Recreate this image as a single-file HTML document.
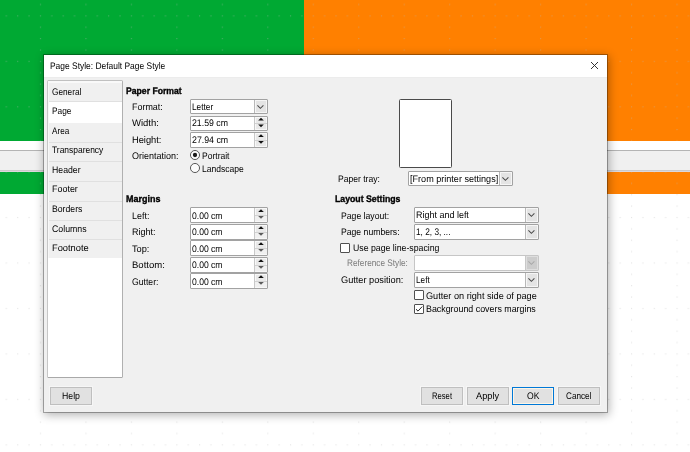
<!DOCTYPE html>
<html><head><meta charset="utf-8"><style>
html,body{margin:0;padding:0;}
body{width:690px;height:452px;overflow:hidden;position:relative;background:#fff;font-family:"Liberation Sans",sans-serif;}
div,span,svg{position:absolute;box-sizing:content-box;}
span{white-space:nowrap;line-height:12px;text-rendering:geometricPrecision;}
</style></head><body>
<div style="left:0px;top:0px;width:304px;height:141px;background:#00a933"></div>
<div style="left:304px;top:0px;width:386px;height:141px;background:#ff8000"></div>
<div style="left:0px;top:150px;width:690px;height:1px;background:#b4b4b4"></div>
<div style="left:0px;top:151px;width:690px;height:19px;background:#f0f0f0"></div>
<div style="left:0px;top:170px;width:690px;height:1px;background:#cbcacb"></div>
<div style="left:0px;top:171px;width:690px;height:1px;background:#dcd8dc"></div>
<div style="left:0px;top:172px;width:304px;height:22px;background:#00a933"></div>
<div style="left:304px;top:172px;width:386px;height:22px;background:#ff8000"></div>
<svg style="position:absolute;left:0;top:0px" width="690" height="141" viewBox="0 0 690 141"><defs><pattern id="g0" patternUnits="userSpaceOnUse" width="45.47" height="45.47" x="39.90" y="15.35"><g fill="#b8b8b8" fill-opacity="0.4"><rect x="0.00" y="0" width="1.1" height="1.1"/><rect x="11.37" y="0" width="1.1" height="1.1"/><rect x="22.73" y="0" width="1.1" height="1.1"/><rect x="34.10" y="0" width="1.1" height="1.1"/><rect x="0" y="11.37" width="1.1" height="1.1"/><rect x="0" y="22.73" width="1.1" height="1.1"/><rect x="0" y="34.10" width="1.1" height="1.1"/></g></pattern></defs><rect x="0" y="0" width="690" height="141" fill="url(#g0)"/></svg>
<svg style="position:absolute;left:0;top:172px" width="690" height="22" viewBox="0 172 690 22"><defs><pattern id="g172" patternUnits="userSpaceOnUse" width="45.47" height="45.47" x="39.90" y="216.95"><g fill="#b8b8b8" fill-opacity="0.4"><rect x="0.00" y="0" width="1.1" height="1.1"/><rect x="11.37" y="0" width="1.1" height="1.1"/><rect x="22.73" y="0" width="1.1" height="1.1"/><rect x="34.10" y="0" width="1.1" height="1.1"/><rect x="0" y="11.37" width="1.1" height="1.1"/><rect x="0" y="22.73" width="1.1" height="1.1"/><rect x="0" y="34.10" width="1.1" height="1.1"/></g></pattern></defs><rect x="0" y="172" width="690" height="22" fill="url(#g172)"/></svg>
<svg style="position:absolute;left:0;top:194px" width="690" height="258" viewBox="0 194 690 258"><defs><pattern id="g194" patternUnits="userSpaceOnUse" width="45.47" height="45.47" x="39.90" y="216.95"><g fill="#b8b8b8" fill-opacity="0.36"><rect x="0.00" y="0" width="1.1" height="1.1"/><rect x="11.37" y="0" width="1.1" height="1.1"/><rect x="22.73" y="0" width="1.1" height="1.1"/><rect x="34.10" y="0" width="1.1" height="1.1"/><rect x="0" y="11.37" width="1.1" height="1.1"/><rect x="0" y="22.73" width="1.1" height="1.1"/><rect x="0" y="34.10" width="1.1" height="1.1"/></g></pattern></defs><rect x="0" y="194" width="690" height="258" fill="url(#g194)"/></svg>
<div style="left:43px;top:54px;width:563px;height:357px;border:1px solid rgba(0,0,0,0.3);background:#f0f0f0;background-clip:padding-box;box-shadow:1px 2px 9px rgba(0,0,0,0.3)"></div>
<div style="left:44px;top:55px;width:563px;height:22px;background:#fff"></div>
<div style="left:44px;top:77px;width:563px;height:1px;background:#ececec"></div>
<svg style="position:absolute;left:590px;top:61px" width="10" height="10" viewBox="0 0 10 10"><path d="M1 1 L8 8 M8 1 L1 8" stroke="#2a2a2a" stroke-width="0.95" fill="none"/></svg>
<div style="left:47px;top:80px;width:74px;height:296px;border:1px solid;border-color:#c0c0c0 #b0b0b0 #a9a9a9 #c6c6c6;border-radius:1.5px;background:#fff"></div>
<div style="left:48px;top:81px;width:74px;height:2px;background:#f9f9f9"></div>
<div style="left:49px;top:83.00px;width:73px;height:18.80px;background:#f0f0f0;box-shadow:-1px 0 0 #f8f8f8"></div>
<div style="left:49px;top:100.80px;width:73px;height:1px;background:#e0e0e0"></div>
<div style="left:49px;top:101.80px;width:73px;height:20.80px;background:#fff;box-shadow:-1px 0 0 #f8f8f8"></div>
<div style="left:49px;top:122.60px;width:73px;height:20.30px;background:#f0f0f0;box-shadow:-1px 0 0 #f8f8f8"></div>
<div style="left:49px;top:141.90px;width:73px;height:1px;background:#e0e0e0"></div>
<div style="left:49px;top:142.90px;width:73px;height:19.20px;background:#f0f0f0;box-shadow:-1px 0 0 #f8f8f8"></div>
<div style="left:49px;top:161.10px;width:73px;height:1px;background:#e0e0e0"></div>
<div style="left:49px;top:162.10px;width:73px;height:19.80px;background:#f0f0f0;box-shadow:-1px 0 0 #f8f8f8"></div>
<div style="left:49px;top:180.90px;width:73px;height:1px;background:#e0e0e0"></div>
<div style="left:49px;top:181.90px;width:73px;height:19.60px;background:#f0f0f0;box-shadow:-1px 0 0 #f8f8f8"></div>
<div style="left:49px;top:200.50px;width:73px;height:1px;background:#e0e0e0"></div>
<div style="left:49px;top:201.50px;width:73px;height:19.30px;background:#f0f0f0;box-shadow:-1px 0 0 #f8f8f8"></div>
<div style="left:49px;top:219.80px;width:73px;height:1px;background:#e0e0e0"></div>
<div style="left:49px;top:220.80px;width:73px;height:19.20px;background:#f0f0f0;box-shadow:-1px 0 0 #f8f8f8"></div>
<div style="left:49px;top:239.00px;width:73px;height:1px;background:#e0e0e0"></div>
<div style="left:49px;top:240.00px;width:73px;height:18.40px;background:#f0f0f0;box-shadow:-1px 0 0 #f8f8f8"></div>
<div style="left:190px;top:99px;width:76px;height:13px;border:1px solid #a2a2a2;border-radius:1px;background:#fff"></div>
<div style="left:254px;top:100px;width:12px;height:13px;background:#e4e4e4;border-left:1px solid #b8b8b8;box-shadow:inset 1px 1px 0 #f6f6f6,inset -1px -1px 0 #f6f6f6"></div>
<svg style="position:absolute;left:256.6px;top:104.6px" width="8" height="5" viewBox="0 0 8 5"><path d="M0.4 0.4 L3.4 3.3 L6.4 0.4" stroke="#4a4a4a" stroke-width="1.05" fill="none"/></svg>
<div style="left:190px;top:116px;width:76px;height:13px;border:1px solid #a2a2a2;border-radius:1px;background:#fff"></div>
<div style="left:254px;top:117px;width:12px;height:13px;background:#e9e9e9;border-left:1px solid #c8c8c8;box-shadow:inset 1px 1px 0 #f8f8f8,inset -1px -1px 0 #f8f8f8"></div>
<div style="left:255px;top:123.0px;width:12px;height:1px;background:#d2d2d2"></div>
<svg style="position:absolute;left:254.6px;top:117px" width="12" height="13" viewBox="0 0 12 13"><path d="M3.2 3.50 L8.8 3.50 L6 0.80 Z" fill="#111"/><path d="M3.2 7.50 L8.8 7.50 L6 10.20 Z" fill="#111"/></svg>
<div style="left:190px;top:132px;width:76px;height:14px;border:1px solid #a2a2a2;border-radius:1px;background:#fff"></div>
<div style="left:254px;top:133px;width:12px;height:14px;background:#e9e9e9;border-left:1px solid #c8c8c8;box-shadow:inset 1px 1px 0 #f8f8f8,inset -1px -1px 0 #f8f8f8"></div>
<div style="left:255px;top:139.5px;width:12px;height:1px;background:#d2d2d2"></div>
<svg style="position:absolute;left:254.6px;top:133px" width="12" height="14" viewBox="0 0 12 14"><path d="M3.2 4.00 L8.8 4.00 L6 1.30 Z" fill="#111"/><path d="M3.2 8.00 L8.8 8.00 L6 10.70 Z" fill="#111"/></svg>
<svg style="position:absolute;left:189px;top:148.6px" width="12" height="12" viewBox="0 0 12 12"><circle cx="6" cy="6" r="4.55" stroke="#474747" stroke-width="0.9" fill="#fcfcfc"/><circle cx="6" cy="6" r="2.15" fill="#1a1a1a"/></svg>
<svg style="position:absolute;left:189px;top:162.3px" width="12" height="12" viewBox="0 0 12 12"><circle cx="6" cy="6" r="4.55" stroke="#474747" stroke-width="0.9" fill="#fcfcfc"/></svg>
<div style="left:190px;top:207px;width:76px;height:14px;border:1px solid #a2a2a2;border-radius:1px;background:#fff"></div>
<div style="left:254px;top:208px;width:12px;height:14px;background:#e9e9e9;border-left:1px solid #c8c8c8;box-shadow:inset 1px 1px 0 #f8f8f8,inset -1px -1px 0 #f8f8f8"></div>
<div style="left:255px;top:215.0px;width:12px;height:6.0px;background:#f0f0f0"></div>
<div style="left:255px;top:214.5px;width:12px;height:1px;background:#d2d2d2"></div>
<svg style="position:absolute;left:254.6px;top:208px" width="12" height="14" viewBox="0 0 12 14"><path d="M3.2 4.00 L8.8 4.00 L6 1.30 Z" fill="#111"/><path d="M3.2 8.00 L8.8 8.00 L6 10.70 Z" fill="#5a5a5a"/></svg>
<div style="left:190px;top:224px;width:76px;height:14px;border:1px solid #a2a2a2;border-radius:1px;background:#fff"></div>
<div style="left:254px;top:225px;width:12px;height:14px;background:#e9e9e9;border-left:1px solid #c8c8c8;box-shadow:inset 1px 1px 0 #f8f8f8,inset -1px -1px 0 #f8f8f8"></div>
<div style="left:255px;top:232.0px;width:12px;height:6.0px;background:#f0f0f0"></div>
<div style="left:255px;top:231.5px;width:12px;height:1px;background:#d2d2d2"></div>
<svg style="position:absolute;left:254.6px;top:225px" width="12" height="14" viewBox="0 0 12 14"><path d="M3.2 4.00 L8.8 4.00 L6 1.30 Z" fill="#111"/><path d="M3.2 8.00 L8.8 8.00 L6 10.70 Z" fill="#5a5a5a"/></svg>
<div style="left:190px;top:240px;width:76px;height:14px;border:1px solid #a2a2a2;border-radius:1px;background:#fff"></div>
<div style="left:254px;top:241px;width:12px;height:14px;background:#e9e9e9;border-left:1px solid #c8c8c8;box-shadow:inset 1px 1px 0 #f8f8f8,inset -1px -1px 0 #f8f8f8"></div>
<div style="left:255px;top:248.0px;width:12px;height:6.0px;background:#f0f0f0"></div>
<div style="left:255px;top:247.5px;width:12px;height:1px;background:#d2d2d2"></div>
<svg style="position:absolute;left:254.6px;top:241px" width="12" height="14" viewBox="0 0 12 14"><path d="M3.2 4.00 L8.8 4.00 L6 1.30 Z" fill="#111"/><path d="M3.2 8.00 L8.8 8.00 L6 10.70 Z" fill="#5a5a5a"/></svg>
<div style="left:190px;top:257px;width:76px;height:14px;border:1px solid #a2a2a2;border-radius:1px;background:#fff"></div>
<div style="left:254px;top:258px;width:12px;height:14px;background:#e9e9e9;border-left:1px solid #c8c8c8;box-shadow:inset 1px 1px 0 #f8f8f8,inset -1px -1px 0 #f8f8f8"></div>
<div style="left:255px;top:265.0px;width:12px;height:6.0px;background:#f0f0f0"></div>
<div style="left:255px;top:264.5px;width:12px;height:1px;background:#d2d2d2"></div>
<svg style="position:absolute;left:254.6px;top:258px" width="12" height="14" viewBox="0 0 12 14"><path d="M3.2 4.00 L8.8 4.00 L6 1.30 Z" fill="#111"/><path d="M3.2 8.00 L8.8 8.00 L6 10.70 Z" fill="#5a5a5a"/></svg>
<div style="left:190px;top:273px;width:76px;height:14px;border:1px solid #a2a2a2;border-radius:1px;background:#fff"></div>
<div style="left:254px;top:274px;width:12px;height:14px;background:#e9e9e9;border-left:1px solid #c8c8c8;box-shadow:inset 1px 1px 0 #f8f8f8,inset -1px -1px 0 #f8f8f8"></div>
<div style="left:255px;top:281.0px;width:12px;height:6.0px;background:#f0f0f0"></div>
<div style="left:255px;top:280.5px;width:12px;height:1px;background:#d2d2d2"></div>
<svg style="position:absolute;left:254.6px;top:274px" width="12" height="14" viewBox="0 0 12 14"><path d="M3.2 4.00 L8.8 4.00 L6 1.30 Z" fill="#111"/><path d="M3.2 8.00 L8.8 8.00 L6 10.70 Z" fill="#5a5a5a"/></svg>
<div style="left:399px;top:99px;width:51px;height:67px;border:1px solid #4a4a4a;border-radius:1.5px;background:#fff"></div>
<div style="left:408px;top:171px;width:103px;height:13px;border:1px solid #a2a2a2;border-radius:1px;background:#fff"></div>
<div style="left:499px;top:172px;width:12px;height:13px;background:#e4e4e4;border-left:1px solid #b8b8b8;box-shadow:inset 1px 1px 0 #f6f6f6,inset -1px -1px 0 #f6f6f6"></div>
<svg style="position:absolute;left:501.6px;top:176.6px" width="8" height="5" viewBox="0 0 8 5"><path d="M0.4 0.4 L3.4 3.3 L6.4 0.4" stroke="#4a4a4a" stroke-width="1.05" fill="none"/></svg>
<div style="left:414px;top:207px;width:123px;height:14px;border:1px solid #a2a2a2;border-radius:1px;background:#fff"></div>
<div style="left:525px;top:208px;width:12px;height:14px;background:#e4e4e4;border-left:1px solid #b8b8b8;box-shadow:inset 1px 1px 0 #f6f6f6,inset -1px -1px 0 #f6f6f6"></div>
<svg style="position:absolute;left:527.6px;top:212.6px" width="8" height="5" viewBox="0 0 8 5"><path d="M0.4 0.4 L3.4 3.3 L6.4 0.4" stroke="#4a4a4a" stroke-width="1.05" fill="none"/></svg>
<div style="left:414px;top:224px;width:123px;height:14px;border:1px solid #a2a2a2;border-radius:1px;background:#fff"></div>
<div style="left:525px;top:225px;width:12px;height:14px;background:#e4e4e4;border-left:1px solid #b8b8b8;box-shadow:inset 1px 1px 0 #f6f6f6,inset -1px -1px 0 #f6f6f6"></div>
<svg style="position:absolute;left:527.6px;top:229.6px" width="8" height="5" viewBox="0 0 8 5"><path d="M0.4 0.4 L3.4 3.3 L6.4 0.4" stroke="#4a4a4a" stroke-width="1.05" fill="none"/></svg>
<div style="left:340px;top:243px;width:8px;height:8px;border:1px solid #505050;border-radius:1px;background:#fff"></div>
<div style="left:414px;top:255px;width:123px;height:14px;border:1px solid #c6c6c6;border-radius:1px;background:#fff"></div>
<div style="left:525px;top:256px;width:12px;height:14px;background:#cccccc;border-left:1px solid #c8c8c8;box-shadow:inset 1px 1px 0 #dedede,inset -1px -1px 0 #dedede"></div>
<svg style="position:absolute;left:527.6px;top:260.6px" width="8" height="5" viewBox="0 0 8 5"><path d="M0.4 0.4 L3.4 3.3 L6.4 0.4" stroke="#a8a8a8" stroke-width="1.05" fill="none"/></svg>
<div style="left:414px;top:272px;width:123px;height:14px;border:1px solid #a2a2a2;border-radius:1px;background:#fff"></div>
<div style="left:525px;top:273px;width:12px;height:14px;background:#e4e4e4;border-left:1px solid #b8b8b8;box-shadow:inset 1px 1px 0 #f6f6f6,inset -1px -1px 0 #f6f6f6"></div>
<svg style="position:absolute;left:527.6px;top:277.6px" width="8" height="5" viewBox="0 0 8 5"><path d="M0.4 0.4 L3.4 3.3 L6.4 0.4" stroke="#4a4a4a" stroke-width="1.05" fill="none"/></svg>
<div style="left:414px;top:290px;width:8px;height:8px;border:1px solid #505050;border-radius:1px;background:#fff"></div>
<div style="left:414px;top:304px;width:8px;height:8px;border:1px solid #505050;border-radius:1px;background:#fff"></div>
<svg style="position:absolute;left:414px;top:304px" width="10" height="10" viewBox="0 0 10 10"><path d="M2 5.2 L4 7.1 L8.2 2.6" stroke="#1a1a1a" stroke-width="0.95" fill="none"/></svg>
<div style="left:50px;top:387px;width:40px;height:16px;border:1px solid #bfbfbf;background:#e1e1e1;box-shadow:0 0 0 1px #f6f6f6"></div>
<div style="left:421px;top:387px;width:40px;height:16px;border:1px solid #bfbfbf;background:#e1e1e1;box-shadow:0 0 0 1px #f6f6f6"></div>
<div style="left:467px;top:387px;width:40px;height:16px;border:1px solid #bfbfbf;background:#e1e1e1;box-shadow:0 0 0 1px #f6f6f6"></div>
<div style="left:512px;top:387px;width:40px;height:16px;border:1px solid #0078d7;background:#e1e1e1;box-shadow:inset 0 0 0 1px #fdf5e6"></div>
<div style="left:558px;top:387px;width:40px;height:16px;border:1px solid #bfbfbf;background:#e1e1e1;box-shadow:0 0 0 1px #f6f6f6"></div>
<div style="left:0;top:0;width:690px;height:452px;will-change:transform">
<span style="left:49.80px;top:61.00px;font-size:9.5px;font-weight:400;color:#000;letter-spacing:0.000px;transform:scaleX(0.8872);transform-origin:0 0">Page Style: Default Page Style</span>
<span style="left:51.80px;top:87.00px;font-size:9.5px;font-weight:400;color:#000;letter-spacing:0.000px;transform:scaleX(0.8668);transform-origin:0 0">General</span>
<span style="left:51.80px;top:106.00px;font-size:9.5px;font-weight:400;color:#000;letter-spacing:0.000px;transform:scaleX(0.8720);transform-origin:0 0">Page</span>
<span style="left:51.80px;top:126.00px;font-size:9.5px;font-weight:400;color:#000;letter-spacing:0.000px;transform:scaleX(0.8565);transform-origin:0 0">Area</span>
<span style="left:51.80px;top:145.00px;font-size:9.5px;font-weight:400;color:#000;letter-spacing:0.000px;transform:scaleX(0.8883);transform-origin:0 0">Transparency</span>
<span style="left:51.80px;top:165.00px;font-size:9.5px;font-weight:400;color:#000;letter-spacing:0.000px;transform:scaleX(0.9163);transform-origin:0 0">Header</span>
<span style="left:51.80px;top:184.00px;font-size:9.5px;font-weight:400;color:#000;letter-spacing:0.000px;transform:scaleX(0.9416);transform-origin:0 0">Footer</span>
<span style="left:51.80px;top:204.00px;font-size:9.5px;font-weight:400;color:#000;letter-spacing:0.000px;transform:scaleX(0.9131);transform-origin:0 0">Borders</span>
<span style="left:51.80px;top:224.00px;font-size:9.5px;font-weight:400;color:#000;letter-spacing:0.000px;transform:scaleX(0.9222);transform-origin:0 0">Columns</span>
<span style="left:51.80px;top:243.00px;font-size:9.5px;font-weight:400;color:#000;letter-spacing:0.000px;transform:scaleX(0.9781);transform-origin:0 0">Footnote</span>
<span style="left:126.40px;top:86.00px;font-size:9.5px;font-weight:700;color:#000;letter-spacing:0.000px;transform:scaleX(0.9086);transform-origin:0 0;-webkit-text-stroke:0.35px #000">Paper Format</span>
<span style="left:132.10px;top:102.00px;font-size:9.5px;font-weight:400;color:#000;letter-spacing:0.000px;transform:scaleX(0.9412);transform-origin:0 0">Format:</span>
<span style="left:191.70px;top:102.00px;font-size:9.5px;font-weight:400;color:#000;letter-spacing:0.000px;transform:scaleX(0.8703);transform-origin:0 0">Letter</span>
<span style="left:132.00px;top:118.00px;font-size:9.5px;font-weight:400;color:#000;letter-spacing:0.000px">Width:</span>
<span style="left:191.80px;top:118.00px;font-size:9.5px;font-weight:400;color:#000;letter-spacing:0.000px;transform:scaleX(0.9192);transform-origin:0 0">21.59 cm</span>
<span style="left:132.00px;top:135.00px;font-size:9.5px;font-weight:400;color:#000;letter-spacing:0.000px;transform:scaleX(0.9776);transform-origin:0 0">Height:</span>
<span style="left:191.80px;top:135.00px;font-size:9.5px;font-weight:400;color:#000;letter-spacing:0.000px;transform:scaleX(0.9244);transform-origin:0 0">27.94 cm</span>
<span style="left:132.00px;top:151.00px;font-size:9.5px;font-weight:400;color:#000;letter-spacing:0.000px;transform:scaleX(0.9449);transform-origin:0 0">Orientation:</span>
<span style="left:202.30px;top:151.00px;font-size:9.5px;font-weight:400;color:#000;letter-spacing:0.000px;transform:scaleX(0.8973);transform-origin:0 0">Portrait</span>
<span style="left:202.30px;top:164.00px;font-size:9.5px;font-weight:400;color:#000;letter-spacing:0.000px;transform:scaleX(0.8961);transform-origin:0 0">Landscape</span>
<span style="left:126.40px;top:194.00px;font-size:9.5px;font-weight:700;color:#000;letter-spacing:0.000px;transform:scaleX(0.9436);transform-origin:0 0;-webkit-text-stroke:0.35px #000">Margins</span>
<span style="left:132.20px;top:211.00px;font-size:9.5px;font-weight:400;color:#000;letter-spacing:0.000px;transform:scaleX(0.9414);transform-origin:0 0">Left:</span>
<span style="left:132.20px;top:227.00px;font-size:9.5px;font-weight:400;color:#000;letter-spacing:0.000px;transform:scaleX(0.9513);transform-origin:0 0">Right:</span>
<span style="left:132.20px;top:244.00px;font-size:9.5px;font-weight:400;color:#000;letter-spacing:0.000px;transform:scaleX(0.9702);transform-origin:0 0">Top:</span>
<span style="left:132.20px;top:260.00px;font-size:9.5px;font-weight:400;color:#000;letter-spacing:0.000px;transform:scaleX(1.0032);transform-origin:0 0">Bottom:</span>
<span style="left:132.20px;top:277.00px;font-size:9.5px;font-weight:400;color:#000;letter-spacing:0.000px;transform:scaleX(0.9120);transform-origin:0 0">Gutter:</span>
<span style="left:191.80px;top:211.00px;font-size:9.5px;font-weight:400;color:#000;letter-spacing:0.000px;transform:scaleX(0.9032);transform-origin:0 0">0.00 cm</span>
<span style="left:191.80px;top:227.00px;font-size:9.5px;font-weight:400;color:#000;letter-spacing:0.000px;transform:scaleX(0.9032);transform-origin:0 0">0.00 cm</span>
<span style="left:191.80px;top:244.00px;font-size:9.5px;font-weight:400;color:#000;letter-spacing:0.000px;transform:scaleX(0.9032);transform-origin:0 0">0.00 cm</span>
<span style="left:191.80px;top:260.00px;font-size:9.5px;font-weight:400;color:#000;letter-spacing:0.000px;transform:scaleX(0.9032);transform-origin:0 0">0.00 cm</span>
<span style="left:191.80px;top:277.00px;font-size:9.5px;font-weight:400;color:#000;letter-spacing:0.000px;transform:scaleX(0.9032);transform-origin:0 0">0.00 cm</span>
<span style="left:337.80px;top:174.00px;font-size:9.5px;font-weight:400;color:#000;letter-spacing:0.000px;transform:scaleX(0.9012);transform-origin:0 0">Paper tray:</span>
<span style="left:409.70px;top:174.00px;font-size:9.5px;font-weight:400;color:#000;letter-spacing:0.000px;transform:scaleX(0.9548);transform-origin:0 0">[From printer settings]</span>
<span style="left:334.90px;top:194.00px;font-size:9.5px;font-weight:700;color:#000;letter-spacing:0.000px;transform:scaleX(0.9187);transform-origin:0 0;-webkit-text-stroke:0.35px #000">Layout Settings</span>
<span style="left:340.80px;top:211.00px;font-size:9.5px;font-weight:400;color:#000;letter-spacing:0.000px;transform:scaleX(0.9104);transform-origin:0 0">Page layout:</span>
<span style="left:415.70px;top:210.00px;font-size:9.5px;font-weight:400;color:#000;letter-spacing:0.000px;transform:scaleX(0.9443);transform-origin:0 0">Right and left</span>
<span style="left:340.80px;top:227.00px;font-size:9.5px;font-weight:400;color:#000;letter-spacing:0.000px;transform:scaleX(0.9093);transform-origin:0 0">Page numbers:</span>
<span style="left:415.70px;top:227.00px;font-size:9.5px;font-weight:400;color:#000;letter-spacing:0.000px;transform:scaleX(0.8700);transform-origin:0 0">1, 2, 3, ...</span>
<span style="left:352.70px;top:243.00px;font-size:9.5px;font-weight:400;color:#000;letter-spacing:0.000px;transform:scaleX(0.9198);transform-origin:0 0">Use page line-spacing</span>
<span style="left:347.00px;top:258.00px;font-size:9.5px;font-weight:400;color:#7a7a7a;letter-spacing:0.000px;transform:scaleX(0.8665);transform-origin:0 0">Reference Style:</span>
<span style="left:340.80px;top:275.00px;font-size:9.5px;font-weight:400;color:#000;letter-spacing:0.000px;transform:scaleX(0.9674);transform-origin:0 0">Gutter position:</span>
<span style="left:415.70px;top:275.00px;font-size:9.5px;font-weight:400;color:#000;letter-spacing:0.000px;transform:scaleX(0.8639);transform-origin:0 0">Left</span>
<span style="left:426.30px;top:291.00px;font-size:9.5px;font-weight:400;color:#000;letter-spacing:0.000px;transform:scaleX(0.9622);transform-origin:0 0">Gutter on right side of page</span>
<span style="left:426.30px;top:304.00px;font-size:9.5px;font-weight:400;color:#000;letter-spacing:0.000px;transform:scaleX(0.9322);transform-origin:0 0">Background covers margins</span>
<span style="left:62.15px;top:391.00px;font-size:9.5px;font-weight:400;color:#000;letter-spacing:0.000px;transform:scaleX(0.9193);transform-origin:0 0">Help</span>
<span style="left:431.85px;top:391.00px;font-size:9.5px;font-weight:400;color:#000;letter-spacing:0.000px;transform:scaleX(0.8063);transform-origin:0 0">Reset</span>
<span style="left:476.35px;top:391.00px;font-size:9.5px;font-weight:400;color:#000;letter-spacing:0.000px;transform:scaleX(0.9703);transform-origin:0 0">Apply</span>
<span style="left:526.50px;top:391.00px;font-size:9.5px;font-weight:400;color:#000;letter-spacing:0.000px;transform:scaleX(0.9034);transform-origin:0 0">OK</span>
<span style="left:566.35px;top:391.00px;font-size:9.5px;font-weight:400;color:#000;letter-spacing:0.000px;transform:scaleX(0.8588);transform-origin:0 0">Cancel</span>
</div>
</body></html>
